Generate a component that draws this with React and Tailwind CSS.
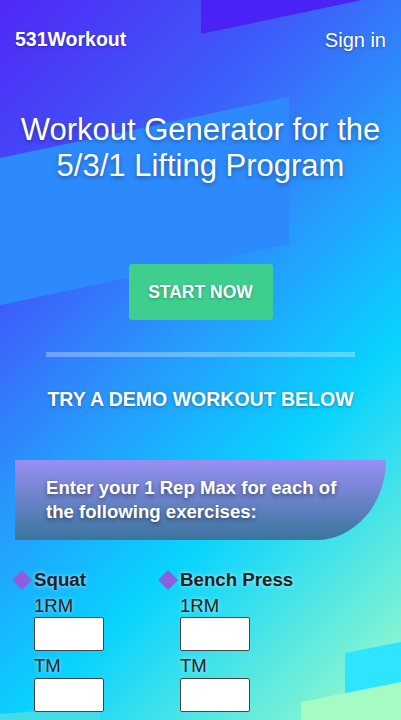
import React from "react";

function Exercise({ name }) {
  return (
    <div className="w-[146px] flex flex-col">
      <div className="flex items-center h-[24px]">
        <div className="w-[20px] h-[20px] flex items-center justify-center">
          <div className="w-[14px] h-[14px] rotate-45 bg-[#8b5fe2]" />
        </div>
        <span className="ml-[2px] text-[18.7px] leading-[24px] font-bold text-[#222] [text-shadow:0_0_4px_rgba(255,255,255,0.7)]">
          {name}
        </span>
      </div>
      <div className="pl-[22px] flex flex-col">
        <span className="mt-[3px] text-[18.5px] leading-[22px] text-[#222] [text-shadow:0_0_4px_rgba(255,255,255,0.6)]">1RM</span>
        <input className="w-[70px] h-[34px] bg-white border border-[#444] rounded-[2px]" />
        <span className="mt-[4px] text-[18.5px] leading-[22px] text-[#222] [text-shadow:0_0_4px_rgba(255,255,255,0.6)]">TM</span>
        <input className="mt-[1px] w-[70px] h-[34px] bg-white border border-[#444] rounded-[2px]" />
      </div>
    </div>
  );
}

export default function App() {
  return (
    <div className="relative w-full min-h-[720px] overflow-hidden font-['Liberation_Sans',Arial,sans-serif] bg-[linear-gradient(135deg,#5028f6_0%,#3d5ffa_28%,#2d8cfc_42%,#08d3fe_66%,#a6fcc6_100%)]">
      <svg className="absolute inset-0 pointer-events-none" width="401" height="720" viewBox="0 0 401 720">
        <polygon points="201,0 362,0 201,34" fill="#4a22f6" />
        <polygon points="0,158 289,97 289,244 0,305" fill="#2d8afd" />
        <polygon points="345,653 401,642 401,720 345,720" fill="#2ee5ff" />
        <polygon points="301,702 401,682 401,720 301,720" fill="#a4fcc4" />
        <polygon points="0,714 100,706 100,720 0,720" fill="#46dbe8" />
      </svg>

      <div className="relative flex flex-col">
        <header className="h-[80px] px-[15px] flex items-center justify-between text-white [text-shadow:0_1px_3px_rgba(0,0,0,0.35)]">
          <span className="text-[19.5px] font-bold">531Workout</span>
          <span className="text-[20px]">Sign in</span>
        </header>

        <h1 className="mt-[32px] text-center text-white text-[31px] leading-[36px] [text-shadow:0_2px_4px_rgba(0,0,0,0.35)]">
          Workout Generator for the
          <br />
          5/3/1 Lifting Program
        </h1>

        <div className="mt-[80px] flex justify-center">
          <button className="w-[144px] h-[56px] rounded-[3px] bg-[#3ecf8e] text-white font-bold text-[17.5px] [text-shadow:0_1px_3px_rgba(0,0,0,0.3)]">
            START NOW
          </button>
        </div>

        <div className="mt-[32px] mx-auto w-[309px] h-[5px] bg-white/30" />

        <p className="mt-[30px] text-center text-white font-bold text-[19.5px] leading-[24px] [text-shadow:0_1px_3px_rgba(0,0,0,0.35)]">
          TRY A DEMO WORKOUT BELOW
        </p>

        <div className="mt-[49px] mx-[15px] h-[80px] rounded-br-[70px_80px] bg-[linear-gradient(180deg,#988ff3_0%,#3a759d_100%)] flex items-center pl-[31px] pr-[40px]">
          <p className="text-white font-bold text-[18.6px] leading-[24px] [text-shadow:0_2px_4px_rgba(0,0,0,0.45)]">
            Enter your 1 Rep Max for each of the following exercises:
          </p>
        </div>

        <div className="mt-[28px] pl-[12px] flex">
          <Exercise name="Squat" />
          <Exercise name="Bench Press" />
        </div>
      </div>
    </div>
  );
}
